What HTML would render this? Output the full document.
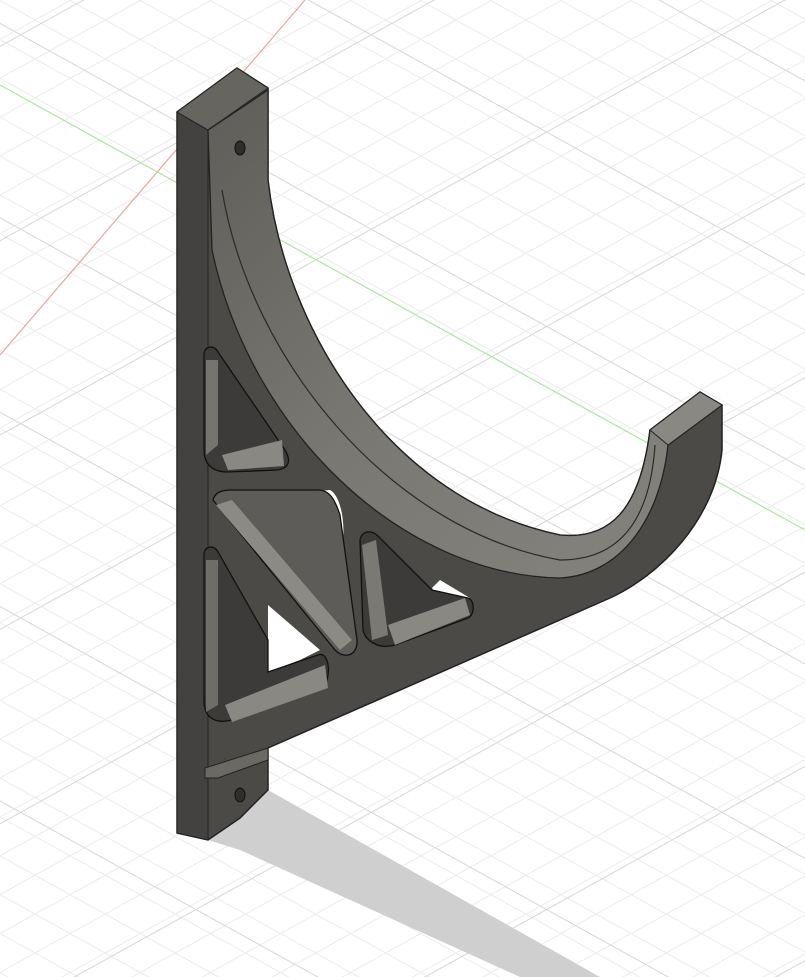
<!DOCTYPE html>
<html><head><style>html,body{margin:0;padding:0;background:#fff;}svg{display:block}</style></head>
<body>
<svg width="805" height="977" viewBox="0 0 805 977" xmlns="http://www.w3.org/2000/svg">
<defs>
<pattern id="g1" width="805" height="34" patternUnits="userSpaceOnUse" patternTransform="rotate(29)">
<line x1="-10" y1="0.5" x2="900" y2="0.5" stroke="#ebebeb" stroke-width="1"/></pattern>
<pattern id="g2" width="805" height="34" patternUnits="userSpaceOnUse" patternTransform="rotate(-29)">
<line x1="-10" y1="0.5" x2="900" y2="0.5" stroke="#ebebeb" stroke-width="1"/></pattern>
<pattern id="m1" width="805" height="170" patternUnits="userSpaceOnUse" patternTransform="rotate(29) translate(0,20)">
<line x1="-10" y1="0.5" x2="900" y2="0.5" stroke="#d6d6d6" stroke-width="1.1"/></pattern>
<pattern id="m2" width="805" height="170" patternUnits="userSpaceOnUse" patternTransform="rotate(-29) translate(0,40)">
<line x1="-10" y1="0.5" x2="900" y2="0.5" stroke="#d6d6d6" stroke-width="1.1"/></pattern>
<linearGradient id="arc" x1="0" y1="0" x2="1" y2="1">
<stop offset="0" stop-color="#5e5d59"/><stop offset="0.5" stop-color="#7a7872"/><stop offset="1" stop-color="#86847e"/></linearGradient>
</defs>
<rect width="805" height="977" fill="#fff"/>
<rect width="805" height="977" fill="url(#g1)"/>
<rect width="805" height="977" fill="url(#g2)"/>
<rect width="805" height="977" fill="url(#m1)"/>
<rect width="805" height="977" fill="url(#m2)"/>
<line x1="0" y1="355" x2="305" y2="0" stroke="#f2a0a0" stroke-width="1.2"/>
<line x1="0" y1="85" x2="805" y2="530" stroke="#a8e8a0" stroke-width="1.2"/>
<polygon points="208,840 268,790 600,977 520,977 240,850" fill="#cfcfcf"/>
<path d="M177,112 L237,68 L268,88 L268,180 C285,330 390,500 560,535 C610,540 640,510 650,430 L700,392 L722,405 L722,450 C715,520 660,575 610,598 L268,748 L268,790 L240,818 L208,840 L177,833 Z" fill="#4b4a47" stroke="#222" stroke-width="1.5"/>
<polygon points="177,112 208,130 208,840 177,833" fill="#434240" stroke="#222" stroke-width="1"/>
<polygon points="177,112 237,68 268,88 208,130" fill="#66655f" stroke="#222" stroke-width="1"/>
<path d="M208,130 L268,90 L268,180 C285,330 390,500 560,535 C610,540 640,510 650,430 L700,392 L722,405 L668,445 C660,520 620,575 560,578 C400,575 250,430 212,250 Z" fill="url(#arc)" stroke="#222" stroke-width="1.3"/>
<path d="M222,190 C250,360 390,530 560,560 C620,560 650,520 655,445" fill="none" stroke="#2a2a2a" stroke-width="1.2"/>
<polygon points="650,430 700,392 722,405 668,445" fill="#8a8882" stroke="#222" stroke-width="1"/>
<path d="M297,493 L330,490 C340,495 345,520 343,540 Z" fill="#fff"/>
<path d="M432,588 L440,580 L470,598 L445,610 Z" fill="#fff"/>
<path d="M268,605 L268,672 L300,660 L320,650 Z" fill="#fff"/>
<path d="M204,355 C204,345 215,345 218,352 L285,450 C292,462 288,468 278,470 L228,472 C210,472 204,462 204,450 Z" fill="#3c3b39" stroke="#111" stroke-width="1.3"/>
<path d="M206,360 L218,360 L218,445 L206,455 Z" fill="#76746f"/>
<path d="M222,455 L282,440 L284,466 L228,470 Z" fill="#8a8882"/>
<path d="M213,500 C215,492 222,490 232,490 L318,490 C330,490 335,500 340,515 L357,640 C358,655 345,660 335,650 Z" fill="#5d5c58" stroke="#111" stroke-width="1.3"/>
<path d="M216,505 L232,500 L352,640 L340,650 Z" fill="#8c8a84"/>
<path d="M204,555 C204,545 215,545 218,552 L268,640 L268,672 L318,655 C330,650 332,680 322,688 L232,720 C212,725 204,715 204,700 Z" fill="#3c3b39" stroke="#111" stroke-width="1.3"/>
<path d="M206,560 L218,560 L218,705 L206,712 Z" fill="#6f6d68"/>
<path d="M225,705 L325,665 L328,688 L232,722 Z" fill="#8a8882"/>
<path d="M360,540 C362,530 372,530 378,536 L432,590 L468,598 C475,600 475,615 468,618 L395,645 C378,650 365,640 363,630 Z" fill="#3c3b39" stroke="#111" stroke-width="1.3"/>
<path d="M362,545 L376,540 L388,635 L372,640 Z" fill="#7b7974"/>
<path d="M388,625 L465,598 L470,615 L395,645 Z" fill="#8a8882"/>
<polygon points="205,768 268,748 268,760 218,778 205,778" fill="#6a6964" stroke="#222" stroke-width="1"/>
<ellipse cx="240" cy="148" rx="5" ry="7" fill="#2e2e2c" stroke="#111"/>
<ellipse cx="240" cy="795" rx="5" ry="7" fill="#2e2e2c" stroke="#111"/>
</svg>
</body></html>
